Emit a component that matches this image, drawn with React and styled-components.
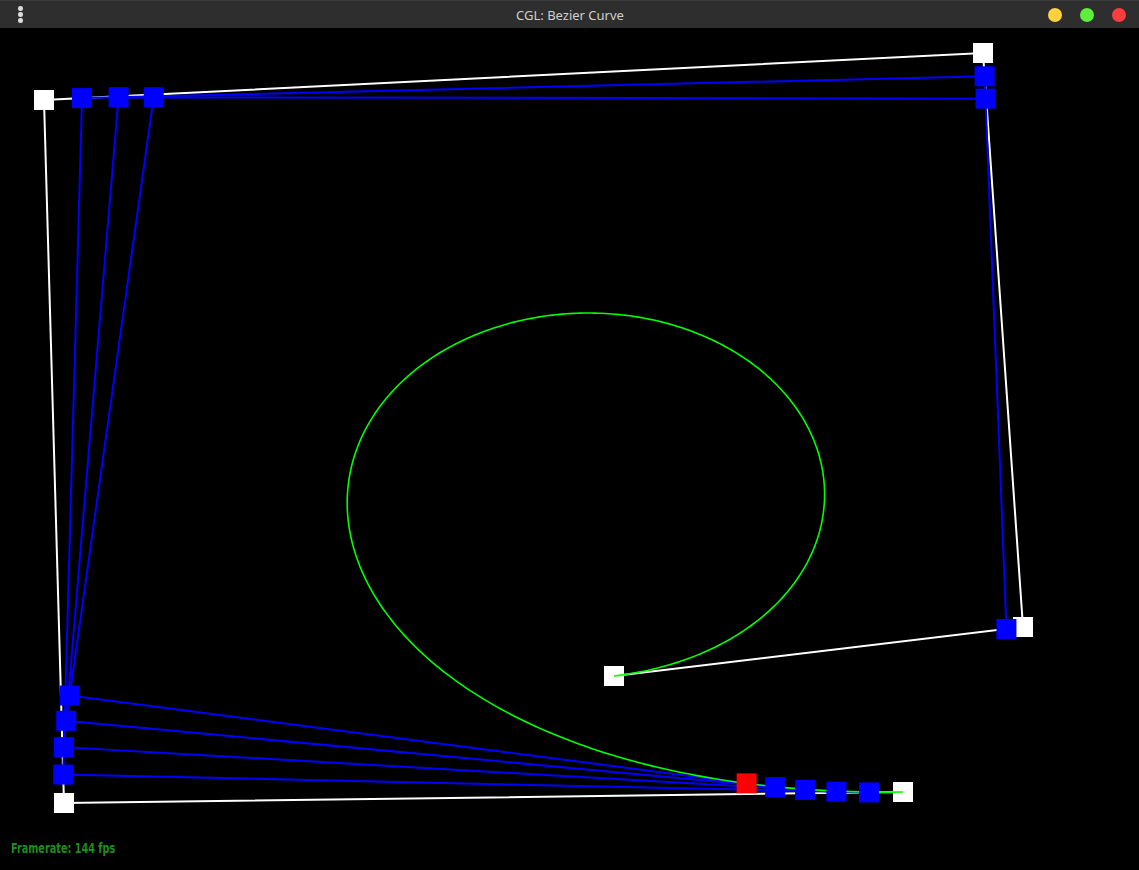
import React from "react";
import styled, { createGlobalStyle } from "styled-components";

const Global = createGlobalStyle`
  html, body { margin: 0; padding: 0; background: #000; }
  body { width: 1139px; height: 870px; overflow: hidden; }
`;

const Window = styled.div`
  width: 1139px;
  height: 870px;
  display: flex;
  flex-direction: column;
  background: #000;
`;

const TitleBar = styled.div`
  height: 28px;
  flex: none;
  display: grid;
  grid-template-columns: 1fr auto 1fr;
  align-items: center;
  background: #2e2e2e;
  border-top: 1px solid #3a3a3a;
  box-sizing: border-box;
`;

const Menu = styled.div`
  display: flex;
  flex-direction: column;
  gap: 1.5px;
  padding-left: 18px;
  justify-self: start;
`;

const Dot = styled.span`
  width: 4.5px;
  height: 4.5px;
  border-radius: 50%;
  background: #dcdcdc;
`;

const Title = styled.div`
  font-family: "Noto Sans", "Open Sans", sans-serif;
  font-size: 13px;
  color: #cfcfcf;
  padding-left: 1px;
`;

const Controls = styled.div`
  justify-self: end;
  display: flex;
  gap: 18px;
  padding-right: 13px;
`;

const Light = styled.span`
  width: 14px;
  height: 14px;
  border-radius: 50%;
  background: ${(p) => p.$color};
`;

const Canvas = styled.div`
  position: relative;
  flex: 1;
`;

const Svg = styled.svg`
  display: block;
`;

const Hud = styled.div`
  position: absolute;
  left: 11px;
  bottom: 14px;
  font-family: "DejaVu Sans Condensed", "DejaVu Sans", sans-serif;
  font-weight: bold;
  font-size: 14px;
  color: #1f8c1f;
  transform: scaleX(0.77);
  transform-origin: left center;
  white-space: nowrap;
`;

const CTRL = [
  [614, 676],
  [1023, 627],
  [983, 53],
  [44, 100],
  [64, 803],
  [903, 792],
];
const T = 0.9595;

const lerp = (a, b, t) => [a[0] + (b[0] - a[0]) * t, a[1] + (b[1] - a[1]) * t];

function casteljau(pts, t) {
  const levels = [pts];
  let cur = pts;
  while (cur.length > 1) {
    const next = [];
    for (let i = 0; i < cur.length - 1; i++) next.push(lerp(cur[i], cur[i + 1], t));
    levels.push(next);
    cur = next;
  }
  return levels;
}

const toPts = (arr) => arr.map((p) => `${p[0].toFixed(2)},${p[1].toFixed(2)}`).join(" ");

const curve = [];
for (let i = 0; i <= 400; i++) {
  const lv = casteljau(CTRL, i / 400);
  curve.push(lv[lv.length - 1][0]);
}

const Square = ({ p, fill }) => (
  <rect x={p[0] - 10} y={p[1] - 10} width={20} height={20} fill={fill} />
);

export default function App() {
  const levels = casteljau(CTRL, T);
  const mid = levels.slice(1, levels.length - 1);
  const red = levels[levels.length - 1][0];
  return (
    <>
      <Global />
      <Window>
        <TitleBar>
          <Menu>
            <Dot />
            <Dot />
            <Dot />
          </Menu>
          <Title>CGL: Bezier Curve</Title>
          <Controls>
            <Light $color="#fdd23d" />
            <Light $color="#5cf03c" />
            <Light $color="#f93d3d" />
          </Controls>
        </TitleBar>
        <Canvas>
          <Svg width="1139" height="842" viewBox="0 28 1139 842">
            <polyline points={toPts(CTRL)} fill="none" stroke="#ffffff" strokeWidth="2" />
            {CTRL.map((p, i) => (
              <Square key={`w${i}`} p={p} fill="#ffffff" />
            ))}
            {mid.map((lv, i) => (
              <polyline key={`bl${i}`} points={toPts(lv)} fill="none" stroke="#0000ff" strokeWidth="2" />
            ))}
            <polyline points={toPts(curve)} fill="none" stroke="#00ff00" strokeWidth="1.6" />
            {mid.map((lv, i) =>
              lv.map((p, j) => <Square key={`b${i}-${j}`} p={p} fill="#0000ff" />)
            )}
            <Square p={red} fill="#ff0000" />
          </Svg>
          <Hud>Framerate: 144 fps</Hud>
        </Canvas>
      </Window>
    </>
  );
}
